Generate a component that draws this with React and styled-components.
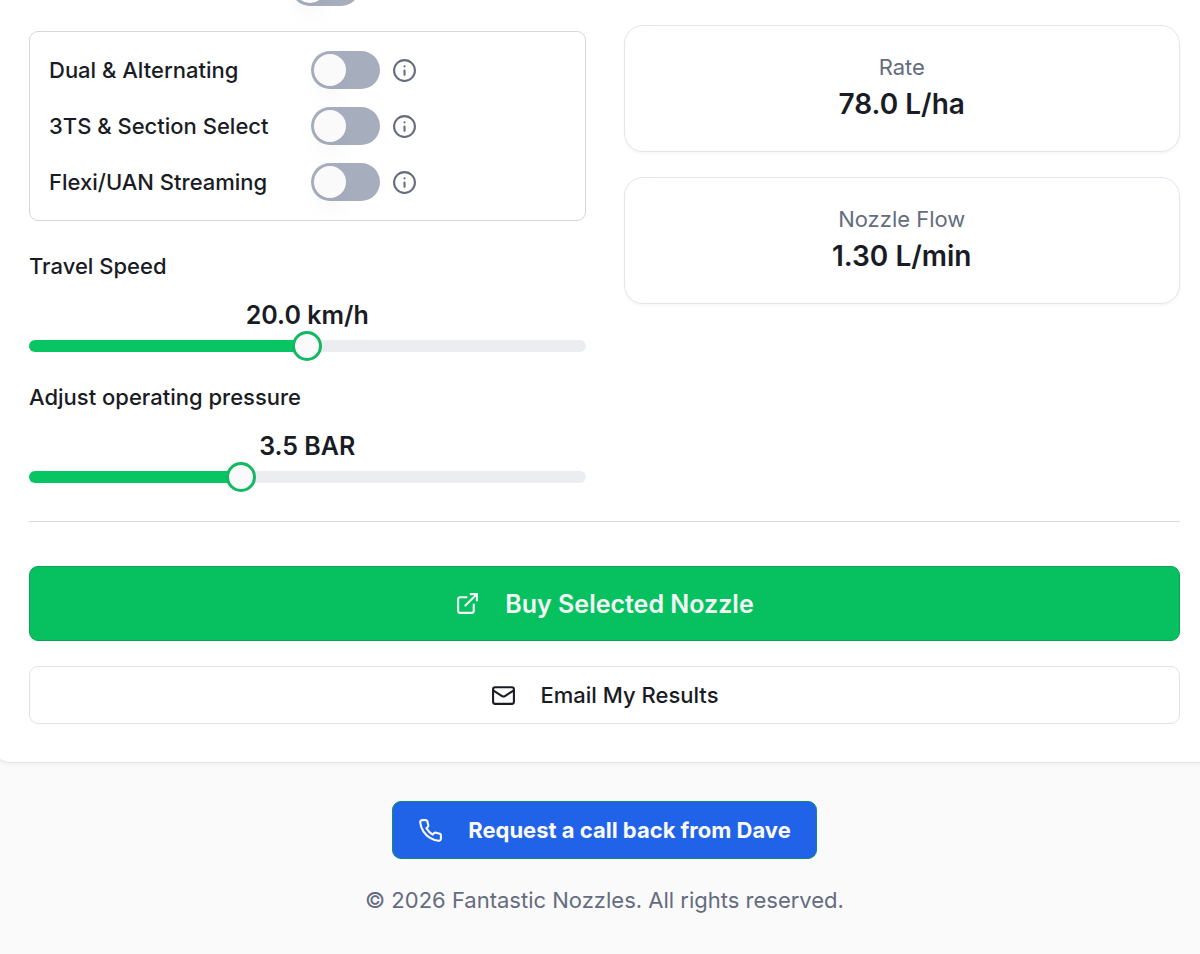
import React, { useState } from "react";
import styled, { createGlobalStyle } from "styled-components";
import { ExternalLink, Mail } from "lucide-react";


const GlobalStyle = createGlobalStyle`
  *, *::before, *::after {
    box-sizing: border-box;
  }

  body {
    margin: 0;
    background: #fafafa;
    color: #191c24;
    font-family: Inter, "Liberation Sans", sans-serif;
    font-size: 22px;
    line-height: 32px;
  }
`

const Page = styled.div`
  display: flex;
  flex-direction: column;
  min-height: 100vh;
  overflow: hidden;
`

const Panel = styled.main`
  margin: -32px -20px 0 -9px;
  padding: 0 39px 38px 37px;
  background: #fff;
  border: 1px solid #e3e4ea;
  border-radius: 19px;
  box-shadow: 0 2px 3px rgba(0, 0, 0, 0.04);
`

const Columns = styled.div`
  display: grid;
  grid-template-columns: 1fr 1fr;
  gap: 38px;
  padding-bottom: 38px;
  border-bottom: 1px solid #d9dade;
`

const Settings = styled.div`
  display: flex;
  flex-direction: column;
  margin-top: -1px;
`

const SwitchRow = styled.div`
  display: flex;
  align-items: center;
  height: 38px;
`

const SwitchLabel = styled.label`
  width: 262px;
  font-weight: 500;
`

const SwitchInput = styled.input`
  appearance: none;
  flex: none;
  width: 69px;
  height: 38px;
  margin: 0;
  padding: 3px;
  border-radius: 19px;
  background: ${({ checked }) => (checked ? "#07c160" : "#a6adbd")};
  cursor: pointer;

  &::before {
    content: "";
    display: block;
    width: 32px;
    height: 32px;
    margin-left: ${({ checked }) => (checked ? "31px" : "0")};
    border-radius: 50%;
    background: #fafafa;
    box-shadow: 0 15px 23px -5px rgba(0, 0, 0, 0.06);
  }
`

const InfoButton = styled.button`
  display: flex;
  margin: 0 0 0 12px;
  padding: 0;
  border: 0;
  background: none;
  color: #646b7d;
  cursor: pointer;
`

const SwitchGroup = styled.div`
  display: flex;
  flex-direction: column;
  gap: 18px;
  margin-top: 25px;
  padding: 19px;
  border: 1px solid #d3d8df;
  border-radius: 9px;
`

const Field = styled.div`
  display: flex;
  flex-direction: column;
  margin-top: 29px;
`

const FieldLabel = styled.label`
  font-weight: 500;
`

const FieldValue = styled.output`
  margin: 15px 0 7px;
  font-size: 25px;
  font-weight: 600;
  line-height: 36px;
  text-align: center;
`

const Range = styled.input`
  appearance: none;
  display: block;
  width: 100%;
  height: 12px;
  margin: 0;
  border-radius: 6px;
  background: linear-gradient(
    to right,
    #07c563 calc(15px + (100% - 30px) * var(--ratio)),
    #ecedf1 calc(15px + (100% - 30px) * var(--ratio))
  );
  cursor: pointer;

  &::-webkit-slider-thumb {
    appearance: none;
    width: 30px;
    height: 30px;
    border: 3px solid #12b862;
    border-radius: 50%;
    background: #fafafa;
  }
`

const Results = styled.div`
  display: flex;
  flex-direction: column;
  gap: 25px;
  padding-top: 56px;
`

const ResultCard = styled.section`
  padding: 25px;
  border: 1px solid #e3e4ec;
  border-radius: 19px;
  box-shadow: 0 2px 3px rgba(0, 0, 0, 0.04);
  text-align: center;
`

const ResultLabel = styled.div`
  color: #646c80;
`

const ResultValue = styled.div`
  font-size: 28px;
  font-weight: 600;
  line-height: 43px;
`

const Actions = styled.div`
  display: flex;
  flex-direction: column;
  gap: 25px;
  padding-top: 44px;
`

const Button = styled.button`
  display: flex;
  align-items: center;
  justify-content: center;
  gap: 25px;
  height: 58px;
  padding: 0 25px;
  border: 1px solid #e2e3e7;
  border-radius: 9px;
  background: #fff;
  color: inherit;
  font: inherit;
  font-weight: 500;
  cursor: pointer;
`

const BuyButton = styled(Button)`
  height: 75px;
  border-color: #0c9f55;
  background: #07c160;
  color: #f3fbf6;
  font-size: 25px;
  font-weight: 600;
`

const CallButton = styled(Button)`
  border-color: #168a6c;
  background: #2063e8;
  color: #fafafa;
  font-weight: 700;
`

const Footer = styled.footer`
  display: flex;
  flex-direction: column;
  align-items: center;
  gap: 25px;
  padding: 38px 0 38px 9px;
  color: #646c80;
`

const Copyright = styled.p`
  margin: 0;
`

const InfoIcon = () => (
  <svg width="25" height="25" viewBox="0 0 24 24" fill="none" stroke="currentColor" strokeWidth="2" strokeLinecap="round">
    <circle cx="12" cy="12" r="10" />
    <path d="M12 16v-4M12 8h.01" />
  </svg>
)

const PhoneIcon = () => (
  <svg width="25" height="25" viewBox="0 0 24 24" fill="none" stroke="currentColor" strokeWidth="2" strokeLinecap="round" strokeLinejoin="round">
    <path d="M22 16.92v3a2 2 0 0 1-2.18 2 19.79 19.79 0 0 1-8.63-3.07 19.5 19.5 0 0 1-6-6 19.79 19.79 0 0 1-3.07-8.67A2 2 0 0 1 4.11 2h3a2 2 0 0 1 2 1.72 12.84 12.84 0 0 0 .7 2.81 2 2 0 0 1-.45 2.11L8.09 9.91a16 16 0 0 0 6 6l1.27-1.27a2 2 0 0 1 2.11-.45 12.84 12.84 0 0 0 2.81.7A2 2 0 0 1 22 16.92z" />
  </svg>
)

const options = [
  { id: "dual", label: "Dual & Alternating" },
  { id: "section", label: "3TS & Section Select" },
  { id: "flexi", label: "Flexi/UAN Streaming" },
]

const results = [
  { label: "Rate", value: "78.0 L/ha" },
  { label: "Nozzle Flow", value: "1.30 L/min" },
]

const Switch = ({ id, label }) => {
  const [on, setOn] = useState(false)

  return (
    <SwitchRow>
      <SwitchLabel htmlFor={id}>{label}</SwitchLabel>
      <SwitchInput
        id={id}
        type="checkbox"
        role="switch"
        aria-label={label ? undefined : "Enable"}
        checked={on}
        onChange={(e) => setOn(e.target.checked)}
      />
      {label && (
        <InfoButton type="button" aria-label={"About " + label}>
          <InfoIcon />
        </InfoButton>
      )}
    </SwitchRow>
  )
}

const SliderField = ({ id, label, unit, min, max, step, initial }) => {
  const [value, setValue] = useState(initial)

  return (
    <Field>
      <FieldLabel htmlFor={id}>{label}</FieldLabel>
      <FieldValue htmlFor={id}>{value.toFixed(1)} {unit}</FieldValue>
      <Range
        id={id}
        type="range"
        min={min}
        max={max}
        step={step}
        value={value}
        onChange={(e) => setValue(Number(e.target.value))}
        style={{ "--ratio": (value - min) / (max - min) }}
      />
    </Field>
  )
}

const App = () => (
  <Page>
    <GlobalStyle />
    <Panel>
      <Columns>
        <Settings>
          <Switch id="enable" />
          <SwitchGroup>
            {options.map((option) => (
              <Switch key={option.id} {...option} />
            ))}
          </SwitchGroup>
          <SliderField id="speed" label="Travel Speed" unit="km/h" min={0} max={40} step={0.5} initial={20} />
          <SliderField id="pressure" label="Adjust operating pressure" unit="BAR" min={2} max={6} step={0.1} initial={3.5} />
        </Settings>
        <Results>
          {results.map(({ label, value }) => (
            <ResultCard key={label}>
              <ResultLabel>{label}</ResultLabel>
              <ResultValue>{value}</ResultValue>
            </ResultCard>
          ))}
        </Results>
      </Columns>
      <Actions>
        <BuyButton type="button">
          <ExternalLink size={25} />
          Buy Selected Nozzle
        </BuyButton>
        <Button type="button">
          <Mail size={25} />
          Email My Results
        </Button>
      </Actions>
    </Panel>
    <Footer>
      <CallButton type="button">
        <PhoneIcon />
        Request a call back from Dave
      </CallButton>
      <Copyright>© 2026 Fantastic Nozzles. All rights reserved.</Copyright>
    </Footer>
  </Page>
)

export default App;
